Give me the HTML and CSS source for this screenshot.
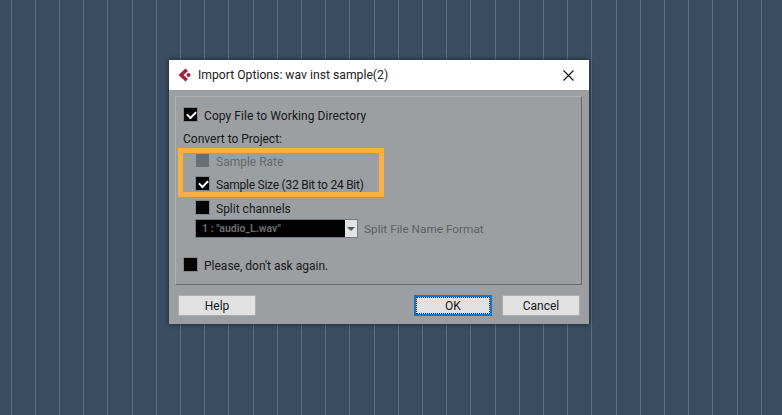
FILE: index.html
```html
<!DOCTYPE html>
<html lang="en">

<head>
    <meta charset="utf-8">
    <title>Import Options</title>
    <link rel="stylesheet" href="styles.css">
</head>

<body>
    <div class="dialog">
        <div class="titlebar">
            <svg class="logo" width="14" height="14" viewBox="0 0 14 14">
                <path d="M7.5 0.5 L0.5 7 L7.5 13.5 L10 11 L5.5 7 L10 3 Z" fill="#a3213a"></path>
                <circle cx="10.5" cy="7" r="2" fill="#a3213a"></circle>
            </svg>
            <span class="title">Import Options: wav inst sample(2)</span>
            <svg class="close" width="11" height="11" viewBox="0 0 11 11">
                <path d="M0.5 0.5 L10.5 10.5 M10.5 0.5 L0.5 10.5" stroke="#111" stroke-width="1.1" fill="none"></path>
            </svg>
        </div>
        <div class="body">
            <div class="panel">
                <label class="row copy"><span class="box checked"></span>Copy File to Working Directory</label>
                <div class="group-label">Convert to Project:</div>
                <div class="sub">
                    <label class="row rate dim"><span class="box off"></span>Sample Rate</label>
                    <label class="row size"><span class="box checked"></span>Sample Size (32 Bit to 24 Bit)</label>
                    <label class="row split"><span class="box"></span>Split channels</label>
                    <div class="format">
                        <div class="select">
                            <span class="select-value">1 : "audio_L.wav"</span>
                            <span class="select-arrow"></span>
                        </div>
                        <span class="format-label">Split File Name Format</span>
                    </div>
                </div>
                <label class="row ask"><span class="box"></span>Please, don't ask again.</label>
                <div class="highlight"></div>
            </div>
            <div class="buttons">
                <button class="btn">Help</button>
                <span class="spacer"></span>
                <button class="btn default">OK</button>
                <button class="btn">Cancel</button>
            </div>
        </div>
    </div>
</body>

</html>
```

FILE: styles.css
```css
* {
    box-sizing: border-box;
}

body {
    margin: 0;
    height: 415px;
    overflow: hidden;
    font-family: Roboto, "Noto Sans", sans-serif;
    font-size: 12px;
    color: #16181a;
    background-color: #3a4d62;
    background-image: repeating-linear-gradient(90deg, transparent 0, transparent 10.6px, #5d7085 10.6px, #5d7085 11.6px, transparent 11.6px, transparent 24.2px);
    padding: 60px 0 0 169px;
}

.dialog {
    width: 420px;
    height: 264px;
    background: #9c9fa2;
    box-shadow: 0 0 5px rgba(15, 22, 30, 0.8);
}

.titlebar {
    height: 30px;
    background: #fff;
    display: flex;
    align-items: center;
    padding: 0 15px 0 9px;
}

.logo {
    margin-right: 6px;
}

.title {
    flex: 1;
    font-size: 12.2px;
    color: #222;
}

.body {
    padding: 6px 7px 0 6px;
}

.panel {
    position: relative;
    height: 189px;
    border: 1px solid;
    border-color: #aeb2b4 #66686a #66686a #aeb2b4;
    padding: 11px 0 0 8px;
}

.row {
    display: flex;
    align-items: flex-start;
    height: 13px;
    line-height: 17px;
}

.copy {
    letter-spacing: 0.07px;
}

.box {
    width: 13px;
    height: 13px;
    margin-right: 7px;
    background: #050505;
    position: relative;
    flex: none;
    box-shadow: 0 0 0 1px #84878a;
}

.box.off {
    background: #6c6e70;
    box-shadow: none;
}

.box.checked::after {
    content: "";
    position: absolute;
    left: 3px;
    top: 3px;
    width: 7px;
    height: 4px;
    border-left: 2px solid #fff;
    border-bottom: 2px solid #fff;
    transform: rotate(-45deg);
}

.group-label {
    margin-top: 9px;
    height: 16px;
    line-height: 18px;
    margin-left: -1px;
}

.sub {
    padding-left: 12px;
    margin-top: 8px;
}

.dim {
    color: #66696c;
}

.row.size {
    margin-top: 10px;
    letter-spacing: -0.24px;
}

.row.split {
    margin-top: 11px;
}

.format {
    display: flex;
    align-items: center;
    margin-top: 5px;
    margin-left: -1px;
}

.select {
    width: 163px;
    height: 19px;
    display: flex;
    background: #020202;
    border: 1px solid #77797b;
}

.select-value {
    flex: 1;
    font-size: 10.5px;
    font-weight: 700;
    line-height: 18px;
    padding-left: 6px;
    color: #66696c;
}

.select-arrow {
    width: 12px;
    background: #e2e3e4;
    position: relative;
}

.select-arrow::after {
    content: "";
    position: absolute;
    left: 2px;
    top: 7px;
    border: 4px solid transparent;
    border-top: 4px solid #55585a;
}

.format-label {
    margin-left: 6px;
    color: #5e6164;
    font-size: 11.8px;
}

.row.ask {
    margin-top: 20px;
}

.highlight {
    position: absolute;
    left: 2px;
    top: 51px;
    width: 206px;
    height: 49px;
    border: 5px solid #fbb040;
}

.buttons {
    display: flex;
    gap: 10px;
    margin-top: 10px;
    padding-left: 3px;
    padding-right: 2px;
}

.spacer {
    flex: 1;
}

.btn {
    width: 78px;
    height: 21px;
    padding: 0;
    font: inherit;
    color: #16181a;
    background: #e1e1e1;
    border: 1px solid #adadad;
}

.btn.default {
    border: 2px solid #1a73c0;
    outline: 1px dotted #222;
    outline-offset: -3px;
}
```
